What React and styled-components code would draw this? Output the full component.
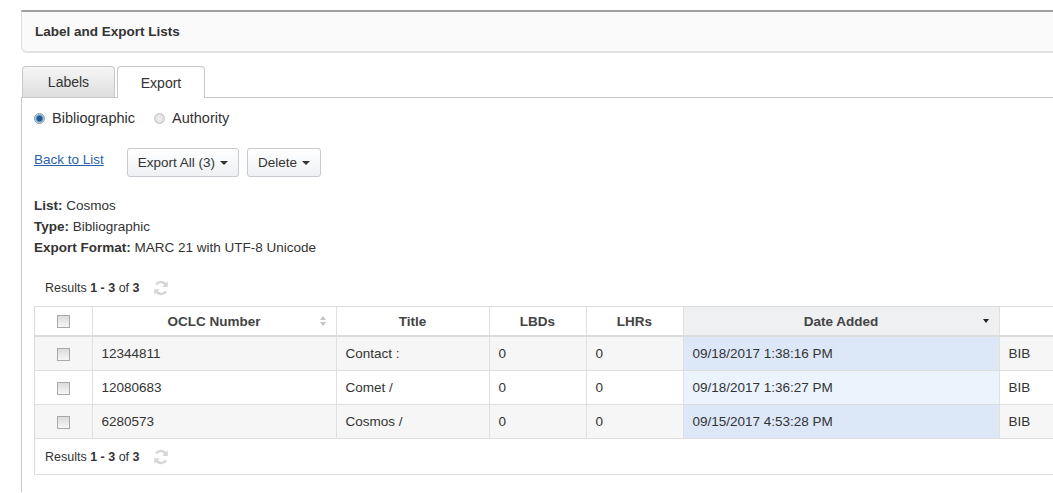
import React from 'react';
import styled, { createGlobalStyle } from 'styled-components';

const GlobalStyle = createGlobalStyle`
  body {
    margin: 0;
    background: #fff;
    font-family: "Liberation Sans", Arial, sans-serif;
    font-size: 13.5px;
    color: #333;
    overflow: hidden;
  }
`;

const Page = styled.div`
  padding: 10px 0 0 21px;
  width: 1032px;
  overflow: hidden;
`;

const HeaderPanel = styled.div`
  height: 39px;
  display: flex;
  align-items: center;
  padding-left: 13px;
  background: #fafafa;
  border-top: 2px solid #a0a0a0;
  border-left: 1px solid #dcdcdc;
  border-bottom: 2px solid #e2e2e2;
  border-bottom-left-radius: 6px;
  font-weight: bold;
  color: #333;
`;

const TabBar = styled.div`
  display: flex;
  align-items: flex-end;
  gap: 2px;
  margin-top: 13px;
  padding-left: 1px;
  border-bottom: 1px solid #c8c8c8;
  height: 31px;
`;

const Tab = styled.div`
  width: ${p => p.$w}px;
  display: flex;
  align-items: center;
  justify-content: center;
  font-size: 14px;
  color: #333;
  border: 1px solid #c8c8c8;
  border-bottom: none;
  border-radius: 4px 4px 0 0;
  background: ${p => (p.$active ? '#fff' : 'linear-gradient(#f6f6f6, #dedede)')};
  margin-bottom: ${p => (p.$active ? '-1px' : '0')};
  height: ${p => (p.$active ? '31px' : '30px')};
`;

const Content = styled.div`
  border-left: 1px solid #c8c8c8;
  padding: 11px 0 17px 12px;
`;

const RadioRow = styled.div`
  display: flex;
  align-items: center;
  gap: 19px;
  height: 18px;
  font-size: 14.5px;
`;

const RadioLabel = styled.label`
  display: flex;
  align-items: center;
  gap: 7px;
  color: #333;
`;

const Radio = styled.span`
  width: 11px;
  height: 11px;
  border-radius: 50%;
  border: 1px solid ${p => (p.$checked ? '#8a9aaa' : '#c4c4c4')};
  background: ${p =>
    p.$checked
      ? 'radial-gradient(circle, #1d5a8f 0 2.5px, #7fb0d8 3.5px, #dfe9f2 5px)'
      : 'radial-gradient(circle, #f2f2f2, #d6d6d6)'};
  box-sizing: border-box;
`;

const Toolbar = styled.div`
  display: flex;
  align-items: center;
  margin-top: 21px;
  height: 29px;
`;

const BackLink = styled.a`
  color: #2a5fa8;
  text-decoration: underline;
  margin-right: 23px;
  position: relative;
  top: -3px;
`;

const DropButton = styled.button`
  height: 29px;
  padding: 0 10px;
  margin-right: 8px;
  display: flex;
  align-items: center;
  gap: 5px;
  font: inherit;
  color: #333;
  background: linear-gradient(#ffffff, #eef0f3);
  border: 1px solid #c6c9ce;
  border-radius: 3px;
`;

const Caret = styled.span`
  width: 0;
  height: 0;
  border-left: 4px solid transparent;
  border-right: 4px solid transparent;
  border-top: 4px solid #333;
  margin-top: 1px;
`;

const Details = styled.div`
  margin-top: 18px;
  line-height: 21px;
`;

const Label = styled.b`
  font-weight: bold;
`;

const ResultsBar = styled.div`
  display: flex;
  align-items: center;
  gap: 12px;
  height: 20px;
  padding-left: ${p => p.$inset}px;
  font-size: 12.5px;
  color: #333;
`;

const Grid = styled.div`
  margin-top: 8px;
  width: 1100px;
  border: 1px solid #dcdcdc;
`;

const Table = styled.table`
  border-collapse: collapse;
  width: 100%;
  table-layout: fixed;
`;

const HeadCell = styled.th`
  height: 28px;
  padding: 0 8px;
  text-align: center;
  font-weight: bold;
  color: #444;
  font-size: 13.5px;
  background: ${p => (p.$sorted ? '#eff0f2' : '#fff')};
  border-left: 1px solid #e0e0e0;
  border-bottom: 2px solid #dcdcdc;
  position: relative;
  &:first-child { border-left: none; }
`;

const Row = styled.tr`
  background: ${p => (p.$alt ? '#f6f6f6' : '#fff')};
`;

const Cell = styled.td`
  height: 33px;
  padding: 0 9px;
  color: #333;
  text-align: ${p => (p.$center ? 'center' : 'left')};
  background: ${p => p.$bg || 'transparent'};
  border-left: 1px solid #e0e0e0;
  border-bottom: 1px solid #dedede;
  &:first-child { border-left: none; }
`;

const Check = styled.span`
  display: inline-block;
  width: 11px;
  height: 11px;
  border: 1px solid #a9a9a9;
  background: linear-gradient(#dcdcdc, #f6f6f6);
  vertical-align: middle;
`;

const SortIcon = styled.span`
  position: absolute;
  right: 10px;
  top: 50%;
  transform: translateY(-50%);
  display: flex;
  flex-direction: column;
  gap: 2px;
`;

const Tri = styled.span`
  width: 0;
  height: 0;
  border-left: 3.5px solid transparent;
  border-right: 3.5px solid transparent;
  ${p => (p.$up ? `border-bottom: 4px solid ${p.$color};` : `border-top: 4px solid ${p.$color};`)}
`;

const Footer = styled.div`
  height: 35px;
  display: flex;
  align-items: center;
`;

// two curved arrows chasing each other, the grid's reload control
const Refresh = () => (
  <svg width="18" height="18" viewBox="0 0 24 24" fill="none" stroke="#d6d6d6" strokeWidth="3.4" strokeLinecap="butt">
    <path d="M18.5 8.5A7.5 7.5 0 0 0 5.5 7.2" />
    <path d="M5.5 15.5a7.5 7.5 0 0 0 13 1.3" />
    <path d="M21 3v7.5h-7.5z" fill="#d6d6d6" stroke="none" />
    <path d="M3 21v-7.5h7.5z" fill="#d6d6d6" stroke="none" />
  </svg>
);

const rows = [
  { oclc: '12344811', title: 'Contact :', date: '09/18/2017 1:38:16 PM' },
  { oclc: '12080683', title: 'Comet /', date: '09/18/2017 1:36:27 PM' },
  { oclc: '6280573', title: 'Cosmos /', date: '09/15/2017 4:53:28 PM' },
];

const Results = ({ inset }) => (
  <ResultsBar $inset={inset}>
    <span>Results <b>1 - 3</b> of <b>3</b></span>
    <Refresh />
  </ResultsBar>
);

export default function App() {
  return (
    <>
      <GlobalStyle />
      <Page>
        <HeaderPanel>Label and Export Lists</HeaderPanel>

        <TabBar>
          <Tab $w={91}>Labels</Tab>
          <Tab $w={86} $active>Export</Tab>
        </TabBar>

        <Content>
          <RadioRow>
            <RadioLabel><Radio $checked />Bibliographic</RadioLabel>
            <RadioLabel><Radio />Authority</RadioLabel>
          </RadioRow>

          <Toolbar>
            <BackLink href="#">Back to List</BackLink>
            <DropButton>Export All (3) <Caret /></DropButton>
            <DropButton>Delete <Caret /></DropButton>
          </Toolbar>

          <Details>
            <div><Label>List:</Label> Cosmos</div>
            <div><Label>Type:</Label> Bibliographic</div>
            <div><Label>Export Format:</Label> MARC 21 with UTF-8 Unicode</div>
          </Details>

          <div style={{ marginTop: 20 }}>
            <Results inset={11} />
          </div>

          <Grid>
            <Table>
              <colgroup>
                <col style={{ width: 57 }} />
                <col style={{ width: 244 }} />
                <col style={{ width: 153 }} />
                <col style={{ width: 97 }} />
                <col style={{ width: 97 }} />
                <col style={{ width: 316 }} />
                <col />
              </colgroup>
              <thead>
                <tr>
                  <HeadCell><Check /></HeadCell>
                  <HeadCell>
                    OCLC Number
                    <SortIcon>
                      <Tri $up $color="#c4c4c4" />
                      <Tri $color="#c4c4c4" />
                    </SortIcon>
                  </HeadCell>
                  <HeadCell>Title</HeadCell>
                  <HeadCell>LBDs</HeadCell>
                  <HeadCell>LHRs</HeadCell>
                  <HeadCell $sorted>
                    Date Added
                    <SortIcon>
                      <Tri $color="#222" />
                    </SortIcon>
                  </HeadCell>
                  <HeadCell />
                </tr>
              </thead>
              <tbody>
                {rows.map((r, i) => (
                  <Row key={r.oclc} $alt={i % 2 === 0}>
                    <Cell $center><Check /></Cell>
                    <Cell>{r.oclc}</Cell>
                    <Cell>{r.title}</Cell>
                    <Cell>0</Cell>
                    <Cell>0</Cell>
                    <Cell $bg={i % 2 === 0 ? '#dce8f8' : '#ebf3fd'}>{r.date}</Cell>
                    <Cell>BIB</Cell>
                  </Row>
                ))}
              </tbody>
            </Table>
            <Footer>
              <Results inset={10} />
            </Footer>
          </Grid>
        </Content>
      </Page>
    </>
  );
}
